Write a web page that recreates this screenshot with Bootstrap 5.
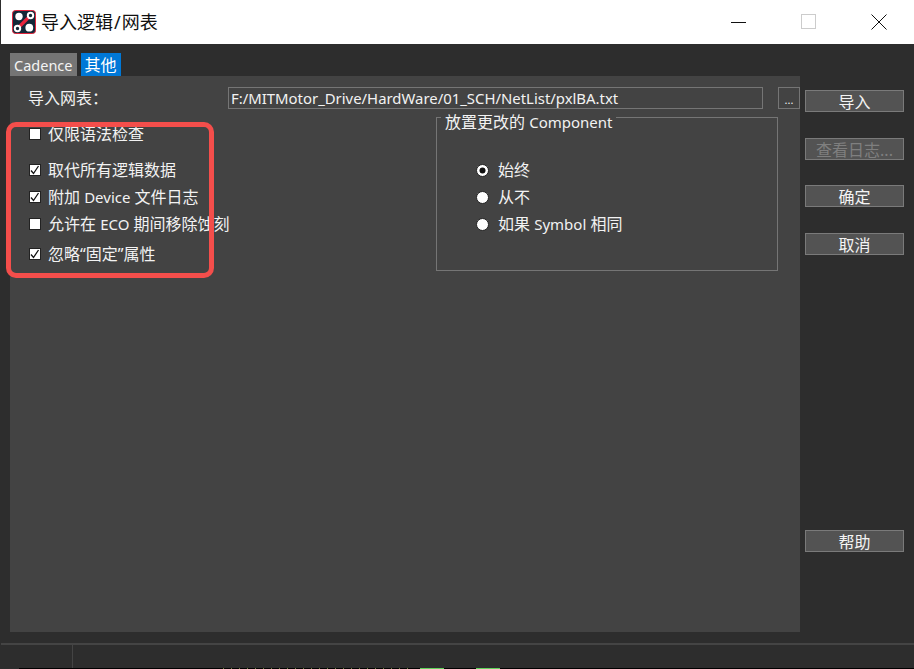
<!DOCTYPE html>
<html lang="zh">
<head>
<meta charset="utf-8">
<title>导入逻辑/网表</title>
<link href="https://cdn.jsdelivr.net/npm/bootstrap@5.3.0/dist/css/bootstrap.min.css" rel="stylesheet">
<style>
html,body{height:100%;margin:0;overflow:hidden}
body{background:#2d2d2d;color:#f2f2f2;font-family:"Noto Sans","Noto Sans CJK SC",sans-serif;font-size:16px;line-height:20px}
.lat{font-size:15px}
.win{width:914px;height:669px;border-left:1px solid #2d2d2d;position:relative}
.ttl{height:44px;background:#fff;color:#111;padding-left:11px;font-size:18px}
.ttl-text{margin-left:5px}
.ttl-slash{margin:0 1px}
.ctl{width:70px;height:44px}
.main{height:599px;padding:9px 10px 0 9px}
.left-col{width:790px}
.tabs-row{height:23px;gap:4px}
.tab-item{height:23px;padding:0 4px;line-height:24px;background:#757575;color:#f4f4f4}
.tab-item .lat{font-size:14.5px}
.tab-item.on{background:#0078d7;color:#fff}
.panel-box{width:790px;height:556px;background:#434343;position:relative}
.file-row{padding-top:11px;height:41px}
.file-label{width:218px;padding-left:18px;line-height:22px}
.file-path{width:535px;height:22px;border:1px solid #757575;background:#434343;color:#f2f2f2;padding:0 2px;font-family:inherit;font-size:14.9px;line-height:20px;border-radius:0;outline:0}
.browse{width:22px;height:22px;margin-left:15px;border:1px solid #757575;background:#434343;color:#eee;font-size:11px;line-height:24px;padding:0;border-radius:0}
.lower{height:515px}
.checks{width:426px;padding-left:19px}
.opt{height:20px;gap:7px;margin:0;white-space:nowrap}
.opt .form-check-input{width:12px;height:12px;margin:0;flex:none;background-color:#fff;border:1px solid #222;border-radius:0;box-shadow:none;background-size:10px 10px}
.opt input[type=checkbox]:checked{background-color:#fff;border-color:#222;background-image:url("data:image/svg+xml,%3Csvg xmlns='http://www.w3.org/2000/svg' viewBox='0 0 10 10'%3E%3Cpath d='M1 5.500l2.500 3 5-7.500' fill='none' stroke='%23111' stroke-width='1.3'/%3E%3C/svg%3E")}
.opt input[type=radio]{border-radius:50%;width:13px;height:13px}
.opt input[type=radio]:checked{background-color:#fff;border-color:#222;background-size:11px 11px;background-image:url("data:image/svg+xml,%3Csvg xmlns='http://www.w3.org/2000/svg' viewBox='0 0 11 11'%3E%3Ccircle cx='5.500' cy='5.500' r='3' fill='%23111'/%3E%3C/svg%3E")}
.c1{margin-top:7px}
.c2{margin-top:16px}
.c3,.c4{margin-top:7px}
.c5{margin-top:10px}
.group-box{width:342px;height:154px;border:1px solid #757575;position:relative;padding:42px 0 0 39px}
.group-title{position:absolute;left:4px;top:-6px;background:#434343;padding:0 4px;line-height:20px;white-space:nowrap}
.group-box .opt{gap:9px;margin-bottom:7px}
.side-col{width:99px;margin-left:5px;padding-top:37px}
.act{display:block;width:99px;height:22px;padding:0;background:#535353;border:1px solid #7a7a7a;border-radius:0;color:#f4f4f4;font-size:16px;line-height:22px}
.act:disabled{background:#535353;border:1px solid #7a7a7a;color:#7f7f7f;opacity:1}
.a2{margin-top:26px}
.a3{margin-top:25px}
.a4{margin-top:26px}
.a5{margin-top:275px}
.stat{height:25px;border-top:2px solid #444;display:flex}
.stat-a{width:72px;border-right:1px solid #444}
.tick-strip{position:absolute;left:18px;right:0;bottom:0;height:1px;background:#000}
.tick-a{position:absolute;left:204px;width:192px;top:0;height:1px;background:repeating-linear-gradient(90deg,#6a7a3a 0 1px,#000 1px 8px)}
.tick-b{position:absolute;left:401px;width:24px;top:0;height:1px;background:#5fd35a}
.tick-c{position:absolute;left:457px;width:24px;top:0;height:1px;background:#5fd35a}
.mark-red{position:absolute;left:5px;top:122px;width:208px;height:156px;border:5px solid #f44e4b;border-radius:10px;pointer-events:none}
</style>
</head>
<body>
<div class="win">
  <div class="ttl d-flex align-items-center">
    <svg width="24" height="24" viewBox="0 0 24 24" aria-hidden="true">
      <rect x=".5" y=".5" width="23" height="23" rx="3" fill="#142838" stroke="#e0243c"/>
      <path d="M5.500 18.500L18.500 5.500" stroke="#e8243c" stroke-width="3.200"/>
      <circle cx="7" cy="6.500" r="3.700" fill="#fff"/>
      <circle cx="17.300" cy="17.700" r="3.900" fill="#fff"/>
      <circle cx="18.500" cy="5.500" r="2.700" fill="#142838" stroke="#fff" stroke-width="2"/>
      <circle cx="5.500" cy="18.500" r="2.700" fill="#142838" stroke="#fff" stroke-width="2"/>
    </svg>
    <span class="ttl-text">导入逻辑<span class="ttl-slash">/</span>网表</span>
    <div class="ms-auto d-flex">
      <div class="ctl d-flex align-items-center justify-content-center"><svg width="16" height="16" viewBox="0 0 16 16"><path d="M0 8.500h15" stroke="#111"/></svg></div>
      <div class="ctl d-flex align-items-center justify-content-center"><svg width="16" height="16" viewBox="0 0 16 16"><rect x=".5" y=".5" width="14" height="14" fill="none" stroke="#ccc"/></svg></div>
      <div class="ctl d-flex align-items-center justify-content-center"><svg width="16" height="16" viewBox="0 0 16 16"><path d="M.5.5l15 15M15.500.5l-15 15" stroke="#111" fill="none"/></svg></div>
    </div>
  </div>
  <div class="main d-flex">
    <div class="left-col">
      <div class="tabs-row d-flex">
        <div class="tab-item"><span class="lat">Cadence</span></div>
        <div class="tab-item on">其他</div>
      </div>
      <div class="panel-box">
        <div class="file-row d-flex">
          <div class="file-label">导入网表：</div>
          <input class="file-path" type="text" value="F:/MITMotor_Drive/HardWare/01_SCH/NetList/pxlBA.txt" readonly>
          <button class="browse" type="button">...</button>
        </div>
        <div class="lower d-flex">
          <div class="checks">
            <label class="opt d-flex align-items-center c1"><input class="form-check-input" type="checkbox"><span>仅限语法检查</span></label>
            <label class="opt d-flex align-items-center c2"><input class="form-check-input" type="checkbox" checked><span>取代所有逻辑数据</span></label>
            <label class="opt d-flex align-items-center c3"><input class="form-check-input" type="checkbox" checked><span>附加 <span class="lat">Device</span> 文件日志</span></label>
            <label class="opt d-flex align-items-center c4"><input class="form-check-input" type="checkbox"><span>允许在 <span class="lat">ECO</span> 期间移除蚀刻</span></label>
            <label class="opt d-flex align-items-center c5"><input class="form-check-input" type="checkbox" checked><span>忽略“固定”属性</span></label>
          </div>
          <div class="group-box">
            <div class="group-title">放置更改的 <span class="lat">Component</span></div>
            <label class="opt d-flex align-items-center"><input class="form-check-input" type="radio" name="pc" checked><span>始终</span></label>
            <label class="opt d-flex align-items-center"><input class="form-check-input" type="radio" name="pc"><span>从不</span></label>
            <label class="opt d-flex align-items-center"><input class="form-check-input" type="radio" name="pc"><span>如果 <span class="lat">Symbol</span> 相同</span></label>
          </div>
        </div>
      </div>
    </div>
    <div class="side-col">
      <button class="act" type="button">导入</button>
      <button class="act a2" type="button" disabled>查看日志...</button>
      <button class="act a3" type="button">确定</button>
      <button class="act a4" type="button">取消</button>
      <button class="act a5" type="button">帮助</button>
    </div>
  </div>
  <div class="stat"><div class="stat-a"></div></div>
  <div class="tick-strip"><div class="tick-a"></div><div class="tick-b"></div><div class="tick-c"></div></div>
  <div class="mark-red"></div>
</div>
<script src="https://cdn.jsdelivr.net/npm/bootstrap@5.3.0/dist/js/bootstrap.bundle.min.js"></script>
</body>
</html>
